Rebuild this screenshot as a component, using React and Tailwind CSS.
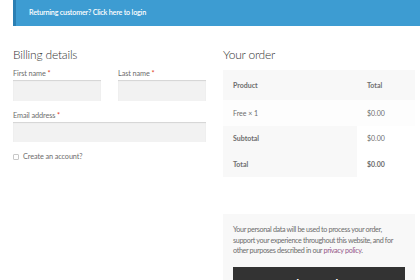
export default function App() {
  const font = { fontFamily: 'Lato, "Liberation Sans", sans-serif' };
  return (
    <div className="w-[420px] h-[280px] overflow-hidden bg-white pl-[13px] text-[#6d6d6d]" style={font}>
      <div className="h-[26px] w-[420px] bg-[#3d9cd2] border-l-[3px] border-[#2b7fb3] flex items-center pl-[13px]">
        <span className="text-white text-[7.2px] font-semibold tracking-[-0.2px]">Returning customer? Click here to login</span>
      </div>
      <div className="flex gap-[17px] mt-[21px]">
        <div className="w-[193px] flex flex-col">
          <h3 className="text-[12px] leading-[16px] font-light text-[#333] tracking-[-0.2px]">Billing details</h3>
          <div className="flex gap-[17px] mt-[6px]">
            <div className="w-[88px] flex flex-col">
              <label className="text-[7.3px] leading-[10px] tracking-[-0.1px]">First name <span className="text-[#e2401c]">*</span></label>
              <div className="mt-[1px] h-[21px] bg-[#f2f2f2] shadow-[inset_0_1px_1px_rgba(0,0,0,0.125)]"></div>
            </div>
            <div className="w-[88px] flex flex-col">
              <label className="text-[7.3px] leading-[10px] tracking-[-0.1px]">Last name <span className="text-[#e2401c]">*</span></label>
              <div className="mt-[1px] h-[21px] bg-[#f2f2f2] shadow-[inset_0_1px_1px_rgba(0,0,0,0.125)]"></div>
            </div>
          </div>
          <label className="mt-[10px] text-[7.3px] leading-[10px] tracking-[-0.1px]">Email address <span className="text-[#e2401c]">*</span></label>
          <div className="mt-[1px] h-[20px] bg-[#f2f2f2] shadow-[inset_0_1px_1px_rgba(0,0,0,0.125)]"></div>
          <div className="mt-[10px] flex items-center gap-[4px] h-[10px]">
            <span className="w-[6px] h-[6px] border border-[#c8c8c8] rounded-[1px] bg-white"></span>
            <span className="text-[7.3px] tracking-[-0.1px]">Create an account?</span>
          </div>
        </div>
        <div className="w-[192px] flex flex-col">
          <h3 className="text-[12px] leading-[16px] font-light text-[#333] tracking-[-0.2px]">Your order</h3>
          <div className="mt-[7px] flex flex-col text-[7px]">
            <div className="flex h-[30px] items-center bg-[#f8f8f8] font-bold">
              <span className="w-[134px] pl-[10px]">Product</span>
              <span className="pl-[10px]">Total</span>
            </div>
            <div className="flex h-[26px] items-center bg-[#fdfdfd]">
              <span className="w-[134px] pl-[10px]">Free × 1</span>
              <span className="pl-[10px]">$0.00</span>
            </div>
            <div className="flex h-[25px]">
              <span className="w-[134px] pl-[10px] bg-[#f8f8f8] font-bold flex items-center">Subtotal</span>
              <span className="pl-[10px] flex items-center">$0.00</span>
            </div>
            <div className="flex h-[26px]">
              <span className="w-[134px] pl-[10px] bg-[#f8f8f8] font-bold flex items-center">Total</span>
              <span className="pl-[10px] flex items-center font-bold">$0.00</span>
            </div>
          </div>
          <div className="mt-[37px] bg-[#f8f8f8] px-[10px] pt-[11px]">
            <p className="text-[7.2px] leading-[10.7px] tracking-[-0.35px]">
              Your personal data will be used to process your order, support your experience throughout this website, and for other purposes described in our <span className="text-[#96588a]">privacy policy</span>.
            </p>
            <div className="mt-[10px] h-[40px] bg-[#333] text-white text-[12px] font-bold flex justify-center pt-[8px]">Place order</div>
          </div>
        </div>
      </div>
    </div>
  );
}
